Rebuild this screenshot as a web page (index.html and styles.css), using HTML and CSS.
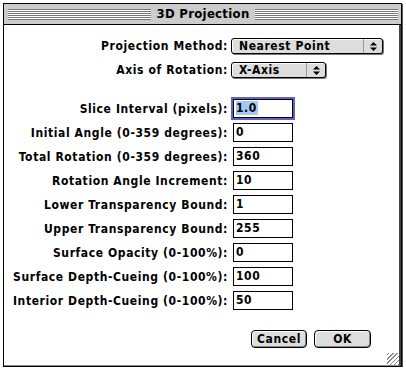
FILE: index.html
```html
<!DOCTYPE html>
<html lang="en">
<head>
  <meta charset="UTF-8">
  <title>3D Projection</title>
  <link rel="stylesheet" href="styles.css">
</head>
<body>
  <div class="window">
    <div class="titlebar">
      <span class="stripes"></span>
      <span class="title">3D Projection</span>
      <span class="stripes"></span>
    </div>

    <div class="content">
      <div class="menus">
        <span class="label">Projection Method:</span>
        <div class="popup popup-wide">
          <span class="popup-text">Nearest Point</span>
          <span class="popup-arrow">
            <svg width="7" height="9" viewBox="0 0 7 9"><path d="M3.5 0 7 3.5H0Z M0 5.5H7L3.5 9Z" fill="#000"/></svg>
          </span>
        </div>

        <span class="label">Axis of Rotation:</span>
        <div class="popup popup-narrow">
          <span class="popup-text">X-Axis</span>
          <span class="popup-arrow">
            <svg width="7" height="9" viewBox="0 0 7 9"><path d="M3.5 0 7 3.5H0Z M0 5.5H7L3.5 9Z" fill="#000"/></svg>
          </span>
        </div>
      </div>

      <div class="fields">
        <span class="label">Slice Interval (pixels):</span>
        <div class="field focused"><span class="selected">1.0</span></div>

        <span class="label">Initial Angle (0-359 degrees):</span>
        <div class="field">0</div>

        <span class="label">Total Rotation (0-359 degrees):</span>
        <div class="field">360</div>

        <span class="label">Rotation Angle Increment:</span>
        <div class="field">10</div>

        <span class="label">Lower Transparency Bound:</span>
        <div class="field">1</div>

        <span class="label">Upper Transparency Bound:</span>
        <div class="field">255</div>

        <span class="label">Surface Opacity (0-100%):</span>
        <div class="field">0</div>

        <span class="label">Surface Depth-Cueing (0-100%):</span>
        <div class="field">100</div>

        <span class="label">Interior Depth-Cueing (0-100%):</span>
        <div class="field">50</div>
      </div>

      <div class="buttons">
        <button class="btn btn-cancel">Cancel</button>
        <button class="btn btn-ok">OK</button>
      </div>

      <span class="grow"></span>
    </div>
  </div>
</body>
</html>
```

FILE: styles.css
```css
body {
  margin: 0;
  background: #fff;
  font-family: "DejaVu Sans Condensed", "DejaVu Sans", sans-serif;
  font-weight: bold;
  font-size: 12px;
  letter-spacing: 0.6px;
  color: #000;
}

.window {
  margin: 3px 0 0 3px;
  width: 399px;
  height: 364px;
  box-sizing: border-box;
  border: 1px solid #000;
  box-shadow: 1px 1px 0 #555;
  display: flex;
  flex-direction: column;
  background: #ccc;
}

.titlebar {
  height: 20px;
  border-bottom: 1px solid #000;
  background: #ccc;
  display: flex;
  align-items: center;
  gap: 5px;
  padding: 0 3px 0 4px;
}

.stripes {
  flex: 1;
  height: 11px;
  background: repeating-linear-gradient(to bottom, #777 0 1px, #fff 1px 2px);
}

.title {
  font-size: 13px;
  letter-spacing: 0.3px;
  line-height: 20px;
}

.content {
  flex: 1;
  background: #fff;
  position: relative;
  border-right: 2px solid #444;
  border-bottom: 1px solid #888;
  padding: 13px 28px 0 0;
  display: flex;
  flex-direction: column;
}

.menus,
.fields {
  display: grid;
  grid-template-columns: 224px auto;
  column-gap: 3px;
  align-items: center;
}

.menus {
  row-gap: 8px;
}

.fields {
  margin-top: 21px;
  row-gap: 5px;
}

.label {
  text-align: right;
  white-space: nowrap;
}

.popup {
  height: 16px;
  box-sizing: border-box;
  border: 1px solid #000;
  border-radius: 3px;
  background: #ddd;
  box-shadow: 1px 1px 0 #777, inset 1px 1px 0 #fff;
  display: flex;
  align-items: center;
}

.popup-wide {
  width: 152px;
}

.popup-narrow {
  width: 95px;
}

.popup-text {
  flex: 1;
  padding-left: 7px;
  line-height: 14px;
}

.popup-arrow {
  width: 18px;
  height: 100%;
  border-left: 1px solid #999;
  display: flex;
  align-items: center;
  justify-content: center;
}

.field {
  margin-left: 2px;
  width: 60px;
  height: 19px;
  box-sizing: border-box;
  border: 1px solid #000;
  padding-left: 2px;
  line-height: 17px;
}

.field.focused {
  box-shadow: 0 0 0 2px #6262c4;
}

.selected {
  background: #a4c8f4;
  padding-right: 1px;
}

.buttons {
  margin-top: 20px;
  display: flex;
  justify-content: flex-end;
  gap: 7px;
}

.btn {
  height: 18px;
  box-sizing: border-box;
  border: 1px solid #000;
  border-radius: 4px;
  background: #ddd;
  box-shadow: inset 1px 1px 0 #fff, inset -1px -1px 0 #888;
  font: inherit;
  letter-spacing: 0.6px;
  color: #000;
  padding: 0;
  line-height: 16px;
}

.btn-cancel {
  width: 56px;
}

.btn-ok {
  width: 57px;
}

.grow {
  position: absolute;
  right: 0;
  bottom: 0;
  width: 12px;
  height: 12px;
  background: repeating-linear-gradient(135deg, #fff 0 1px, #888 1px 2px, #fff 2px 3px);
}
```
